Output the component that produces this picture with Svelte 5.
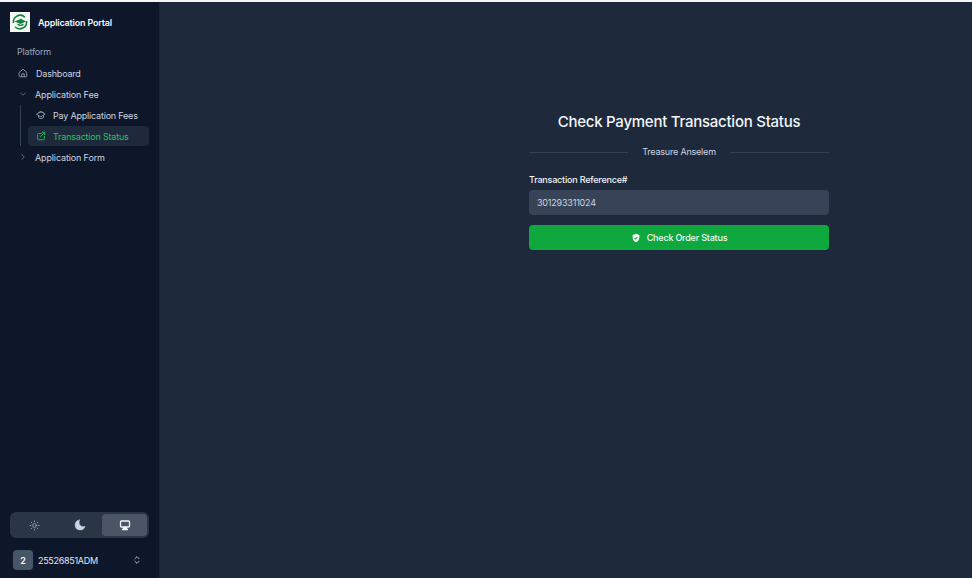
<script>
  const sub = [
    { label: 'Pay Application Fees', active: false },
    { label: 'Transaction Status', active: true }
  ];
</script>

<div class="page">
  <aside class="sidebar">
    <div class="brand">
      <div class="logo">
        <svg viewBox="0 0 20 20" width="20" height="20">
          <rect width="20" height="20" fill="#f4f7f4" />
          <path d="M3.500 11a6.800 6.800 0 0 1 11.500-5.800" fill="none" stroke="#15803d" stroke-width="1.500" />
          <path d="M16.500 9a6.800 6.800 0 0 1-11.500 5.800" fill="none" stroke="#15803d" stroke-width="1.500" />
          <path d="M4.500 9.500 11 6.800l5 2.700-5.500 2.400z" fill="#16803f" />
          <path d="M7.500 11.500v1.800c2 1 4 1 6 0v-1.800l-3 1.300z" fill="#16803f" />
        </svg>
      </div>
      <span class="brand-name">Application Portal</span>
    </div>

    <div class="group-label">Platform</div>

    <nav class="nav">
      <div class="row">
        <svg class="ic" viewBox="0 0 24 24"><path d="M3 10.500 12 3l9 7.500V20a1 1 0 0 1-1 1H4a1 1 0 0 1-1-1z" /><path d="M9 21v-7h6v7" /></svg>
        <span>Dashboard</span>
      </div>
      <div class="row">
        <svg class="ic small" viewBox="0 0 24 24"><path d="m6 9 6 6 6-6" /></svg>
        <span>Application Fee</span>
      </div>
      <div class="subnav">
        {#each sub as item}
          <div class="row subrow" class:active={item.active}>
            {#if item.active}
              <svg class="ic" viewBox="0 0 24 24"><path d="M20 13v6a2 2 0 0 1-2 2H6a2 2 0 0 1-2-2V8a2 2 0 0 1 2-2h6" /><path d="M10 14 21 3" /><path d="M15 3h6v6" /></svg>
            {:else}
              <svg class="ic" viewBox="0 0 24 24"><path d="M2 10l10-6 10 6-10 6z" /><path d="M6 13v5c4 3 8 3 12 0v-5" /><path d="M6 6.500c4-3 8-3 12 0" /></svg>
            {/if}
            <span>{item.label}</span>
          </div>
        {/each}
      </div>
      <div class="row">
        <svg class="ic small" viewBox="0 0 24 24"><path d="m9 6 6 6-6 6" /></svg>
        <span>Application Form</span>
      </div>
    </nav>

    <div class="spacer"></div>

    <div class="theme">
      <button class="theme-btn" aria-label="Light">
        <svg class="ic sun" viewBox="0 0 24 24"><circle cx="12" cy="12" r="4" /><path d="M12 2v2M12 20v2M4.900 4.900l1.400 1.400M17.700 17.700l1.400 1.400M2 12h2M20 12h2M4.900 19.100l1.400-1.400M17.700 6.300l1.400-1.400" /></svg>
      </button>
      <button class="theme-btn" aria-label="Dark">
        <svg class="ic moon" viewBox="0 0 24 24"><path d="M11 2a10 10 0 1 0 11 12c-2 1.500-5 1.800-7.500.5C10.500 12.500 9 6.500 11 2z" /></svg>
      </button>
      <button class="theme-btn selected" aria-label="System">
        <svg class="ic monitor" viewBox="0 0 24 24"><rect x="3" y="4" width="18" height="12" rx="2" /><path d="M9 17h6v3H9z" class="solid" /><path d="M7 21h10" /></svg>
      </button>
    </div>

    <div class="user">
      <div class="avatar">2</div>
      <span class="user-id">25526851ADM</span>
      <svg class="ic updown" viewBox="0 0 24 24"><path d="m7 15 5 5 5-5" /><path d="m7 9 5-5 5 5" /></svg>
    </div>
  </aside>

  <main class="main">
    <section class="card">
      <h1>Check Payment Transaction Status</h1>
      <div class="divider"><span>Treasure Anselem</span></div>
      <label class="label" for="ref">Transaction Reference#</label>
      <input id="ref" class="input" value="301293311024" />
      <button class="submit">
        <svg viewBox="0 0 24 24" width="10" height="10"><path d="M12 2 4 5v6c0 5.500 3.400 9.300 8 11 4.600-1.700 8-5.500 8-11V5z" fill="#fff" /><path d="m8.500 12 2.500 2.500 4.500-4.500" fill="none" stroke="#16a34a" stroke-width="2.500" /></svg>
        <span>Check Order Status</span>
      </button>
    </section>
  </main>
</div>

<style>
  :global(body) {
    margin: 0;
    background: #1e293b;
  }
  .page {
    display: flex;
    height: 576px;
    border-top: 2px solid #f5f6f7;
    font-family: Inter, "Liberation Sans", sans-serif;
    letter-spacing: -0.2px;
    overflow: hidden;
  }
  .sidebar {
    width: 160px;
    flex: none;
    background: #0e172a;
    border-right: 1px solid #1a2435;
    box-sizing: border-box;
    display: flex;
    flex-direction: column;
    padding: 10px 10px 0;
  }
  .brand {
    display: flex;
    align-items: center;
    gap: 8px;
    height: 20px;
  }
  .logo {
    width: 20px;
    height: 20px;
    flex: none;
  }
  .logo svg { display: block; }
  .brand-name {
    font-size: 9px;
    font-weight: 600;
    color: #f1f5f9;
  }
  .group-label {
    margin: 14px 0 0 7px;
    font-size: 9px;
    line-height: 12px;
    color: #94a3b8;
  }
  .nav {
    margin-top: 5px;
    display: flex;
    flex-direction: column;
    gap: 1px;
  }
  .row {
    display: flex;
    align-items: center;
    gap: 8px;
    height: 20px;
    padding-left: 8px;
    font-size: 9px;
    color: #cbd5e1;
  }
  .row > .small + span {
    margin-left: -1px;
    letter-spacing: -0.14px;
  }
  .ic {
    width: 10px;
    height: 10px;
    flex: none;
    fill: none;
    stroke: #94a3b8;
    stroke-width: 2;
    stroke-linecap: round;
    stroke-linejoin: round;
  }
  .small { stroke: #64748b; }
  .subnav {
    margin-left: 10px;
    border-left: 1px solid #334155;
    padding-left: 7px;
    display: flex;
    flex-direction: column;
    gap: 1px;
  }
  .subrow {
    border-radius: 4px;
    width: 121px;
    box-sizing: border-box;
    gap: 7px;
  }
  .subrow.active {
    background: #1e293b;
    color: #22c55e;
  }
  .subrow.active .ic { stroke: #22c55e; }
  .spacer { flex: 1; }
  .theme {
    display: flex;
    height: 26px;
    padding: 2px;
    box-sizing: border-box;
    background: #2a3546;
    border-radius: 6px;
    margin: 0 0 12px 0;
    width: 139px;
  }
  .theme-btn {
    flex: 1;
    border: 0;
    background: transparent;
    border-radius: 4px;
    display: flex;
    align-items: center;
    justify-content: center;
    padding: 0;
  }
  .theme-btn.selected { background: #4b5565; }
  .theme-btn.selected .ic {
    stroke: #f1f5f9;
    stroke-width: 2.600;
  }
  .sun { width: 11px; height: 11px; }
  .moon {
    width: 12px;
    height: 12px;
    fill: #cbd5e1;
    stroke: #cbd5e1;
    stroke-width: 1;
  }
  .monitor { width: 12px; height: 12px; }
  .solid { fill: #f1f5f9; }
  .user {
    display: flex;
    align-items: center;
    height: 20px;
    padding-left: 3px;
    margin-bottom: 8px;
  }
  .avatar {
    width: 20px;
    height: 20px;
    border-radius: 4px;
    background: #475569;
    color: #f1f5f9;
    font-size: 9px;
    font-weight: 600;
    display: flex;
    align-items: center;
    justify-content: center;
  }
  .user-id {
    margin-left: 5px;
    font-size: 9px;
    letter-spacing: -0.3px;
    color: #e2e8f0;
  }
  .updown {
    margin-left: auto;
    margin-right: 7px;
    stroke: #cbd5e1;
  }
  .main {
    flex: 1;
    display: flex;
    justify-content: flex-end;
    padding: 110px 143px 0 0;
  }
  .card {
    width: 300px;
    display: flex;
    flex-direction: column;
  }
  h1 {
    margin: 0;
    text-align: center;
    font-size: 15px;
    line-height: 20px;
    font-weight: 500;
    color: #f1f5f9;
    letter-spacing: -0.25px;
  }
  .divider {
    margin-top: 14px;
    display: flex;
    align-items: center;
    gap: 14px;
    font-size: 9px;
    line-height: 12px;
    color: #cbd5e1;
  }
  .divider::before,
  .divider::after {
    content: "";
    flex: 1;
    height: 1px;
    background: #334155;
  }
  .label {
    margin-top: 16px;
    font-size: 9px;
    line-height: 12px;
    font-weight: 500;
    color: #f1f5f9;
  }
  .input {
    margin-top: 4px;
    height: 25px;
    box-sizing: border-box;
    border: 0;
    border-radius: 4px;
    background: #374357;
    padding: 0 8px;
    font: 9px Inter, "Liberation Sans", sans-serif;
    letter-spacing: -0.2px;
    color: #cbd5e1;
    outline: none;
  }
  .submit {
    margin-top: 10px;
    height: 25px;
    border: 0;
    border-radius: 4px;
    background: #0ea83f;
    color: #f0fdf4;
    font: 500 9px Inter, "Liberation Sans", sans-serif;
    letter-spacing: -0.2px;
    display: flex;
    align-items: center;
    justify-content: center;
    gap: 6px;
    padding: 0;
  }
</style>
